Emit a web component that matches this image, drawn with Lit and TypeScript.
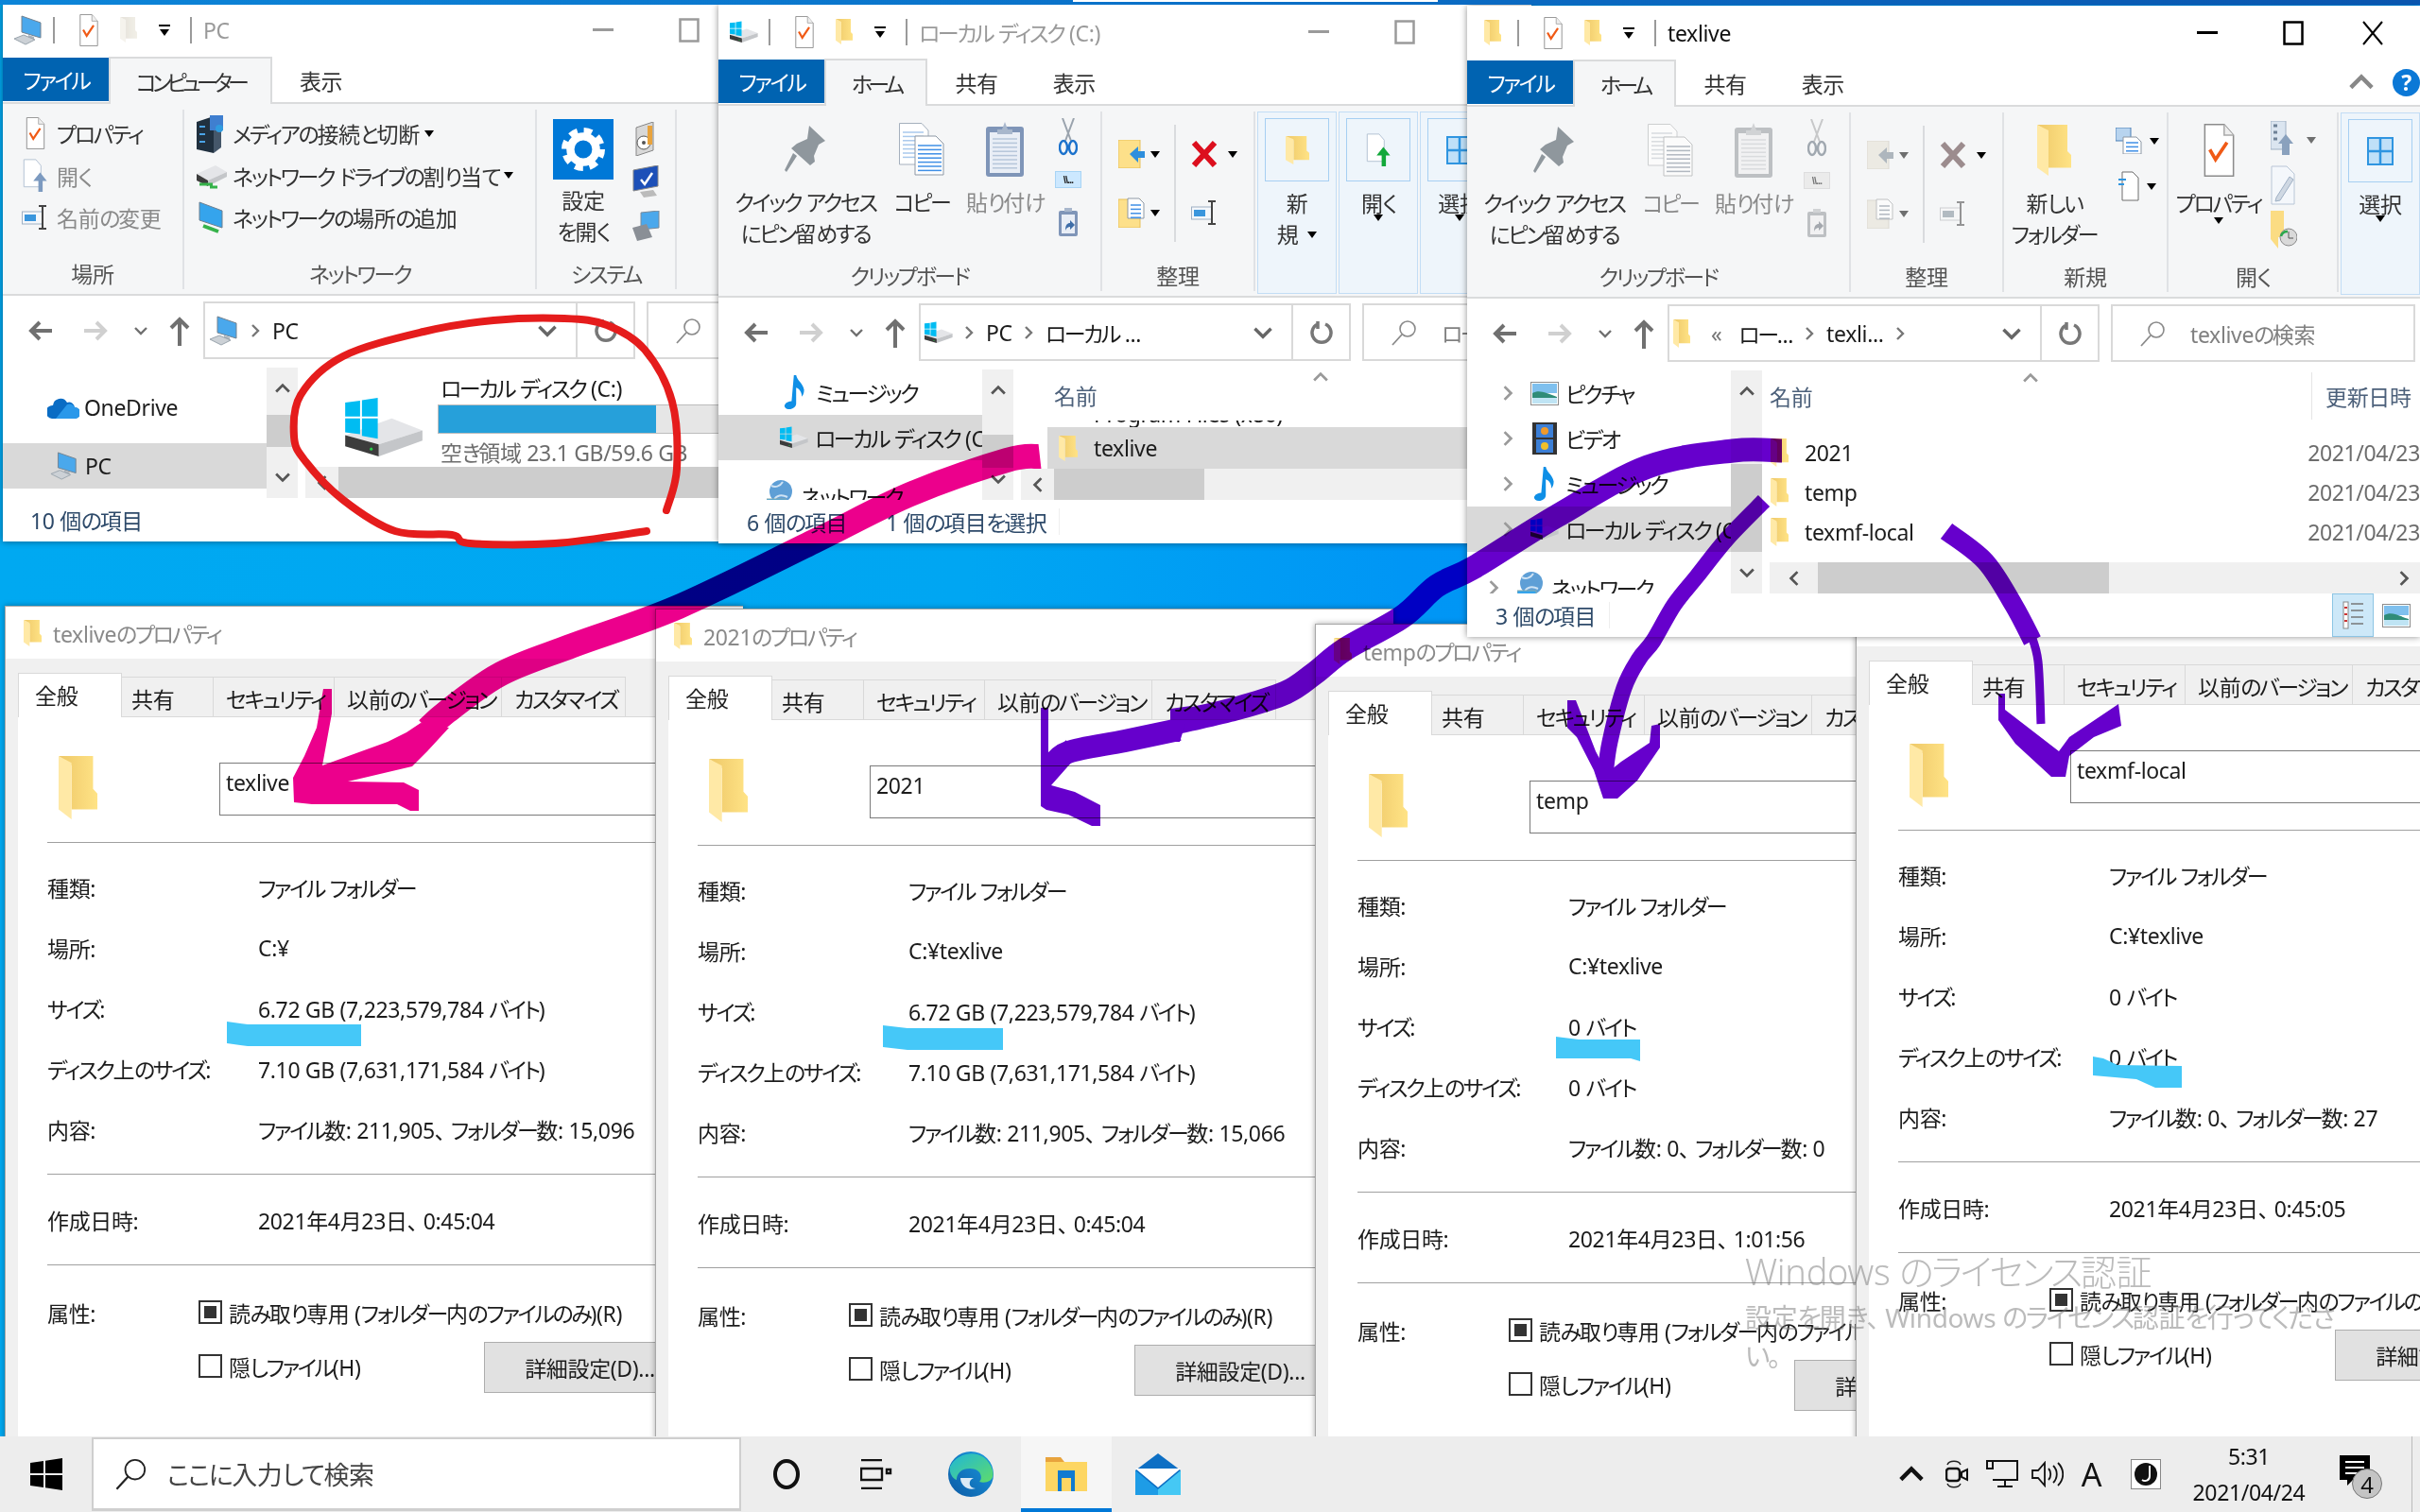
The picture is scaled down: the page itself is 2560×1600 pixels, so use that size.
import { LitElement, html, css, svg } from 'lit';
import { customElement, property } from 'lit/decorators.js';

const t = (s: string) =>
  html`<span class="t">${s.split(/([\u3040-\u30ff]+|、)/).map((p, i) =>
    i % 2 ? html`<span class=${p === '、' ? 'p' : 'k'}>${p}</span>` : p)}</span>`;

const base = css`
  * { box-sizing: border-box; }
  :host {
    font-family: "Noto Sans", "Noto Sans CJK JP", sans-serif;
    font-size: 23px;
    letter-spacing: -0.35px;
    font-feature-settings: "palt" 1;
    color: #1c1c1c;
  }
  .k { letter-spacing: -2.4px; }
  .p { margin-right: 6px; }
  svg { display: block; flex: none; }
  .off { filter: grayscale(0.85) opacity(0.55); }
  .tri { width: 0; height: 0; flex: none; border: 5.5px solid transparent; border-top: 7px solid #000; border-bottom: 0; }
`;

const folder = (w = 20, h = 30) => html`<svg width=${w} height=${h} viewBox="0 0 90 202" preserveAspectRatio="none">
  <defs><linearGradient id="fg" x1="0" x2="1"><stop offset="0" stop-color="#eec868"/><stop offset="1" stop-color="#ffe386"/></linearGradient></defs>
  <path d="M0 0H80V105L90 120V170H30V30Z" fill="url(#fg)"/>
  <path d="M0 0L30 22V202L0 170Z" fill="#ffe9a6"/></svg>`;

const pc = (s = 30) => html`<svg width=${s} height=${s} viewBox="0 0 32 32">
  <path d="M9 1L29 8V24L9 18Z" fill="#4aa8ec" stroke="#74828f"/>
  <path d="M16 21l6 2v4l-6-2z" fill="#aab3bb"/>
  <path d="M1 25l10-4 12 5-10 5z" fill="#ccd1d6" stroke="#9aa4ad"/></svg>`;

const drive = (w = 83, h = 63) => html`<svg width=${w} height=${h} viewBox="0 0 84 64">
  <path d="M0 40L50 22L83 35L36 50Z" fill="#e4e5e8"/>
  <path d="M36 50L83 35V46L36 63Z" fill="#c4c6c9"/>
  <path d="M0 40L36 50V63L0 52Z" fill="#3c3c3c"/>
  <circle cx="28" cy="55" r="1.6" fill="#28d04a"/>
  <path d="M0 5L16 3V20H0ZM18 2.5L35 0V20H18ZM0 22H16V39L0 37ZM18 22H35V44L18 41Z" fill="#00bcf2"/></svg>`;

const checkDoc = (w = 21, h = 37) => html`<svg width=${w} height=${h} viewBox="0 0 21 37">
  <path d="M.5.5H14L20.500 8V36.500H.5Z" fill="#fff" stroke="#8b8b8b"/>
  <path d="M14 .5V8H20.500" fill="#eee" stroke="#aaa"/>
  <path d="M4 18l4 7 8-12" fill="none" stroke="#f05a16" stroke-width="2.400"/></svg>`;

const openDoc = (c = '#7c9ac0') => html`<svg width="28" height="36" viewBox="0 0 28 40">
  <path d="M1 1H15L21 8V33H1Z" fill="#fff" stroke="#aebdd0"/>
  <path d="M18 39V26H12L20 16L28 26H23V39Z" fill=${c}/></svg>`;

const renameIc = (w = 28, h = 26) => html`<svg width=${w} height=${h} viewBox="0 0 28 26">
  <rect x=".5" y="7" width="21" height="13" fill="#f4f7fb" stroke="#9fb0c4"/>
  <rect x="3" y="10" width="12" height="7" fill="#3a96dd"/>
  <path d="M18 1h8M22 1v24M18 25h8" stroke="#444" stroke-width="2" fill="none"/></svg>`;

const lines = (x: number, y: number, w: number, n: number, c: string) =>
  Array.from({ length: n }, (_, i) => svg`<path d="M${x} ${y + i * 4.4}h${w}" stroke=${c} stroke-width="1.500"/>`);

const copyIc = () => html`<svg width="48" height="56" viewBox="0 0 48 56">
  <path d="M.5.5H24L31 8V44H.5Z" fill="#fff" stroke="#a5b0bd"/>${lines(4, 10, 22, 7, '#a9c9ec')}
  <path d="M17 14H39L47 22V55H17Z" fill="#fff" stroke="#8d98a5"/>${lines(20, 24, 25, 7, '#3f8fe6')}</svg>`;

const pasteIc = () => html`<svg width="40" height="58" viewBox="0 0 40 58">
  <rect x="0" y="5" width="40" height="53" rx="3" fill="#7f95b8"/>
  <rect x="4" y="11" width="32" height="43" fill="#e9eef6"/>${lines(7, 18, 26, 8, '#b6c6da')}
  <path d="M12 8h5l3-8 3 8h5v5H12z" fill="#a8b7cc"/></svg>`;

const pinIc = () => html`<svg width="44" height="52" viewBox="0 0 44 52">
  <path d="M26 1L43 17L36 21L31 33L32 39L27 43L7 25L13 20L24 15Z" fill="#8f979d"/>
  <path d="M13 33L2 50L0 48L9 30Z" fill="#8f979d"/></svg>`;

const scissors = () => html`<svg width="20" height="40" viewBox="0 0 20 40">
  <path d="M4 0L13 24M16 0L7 24" stroke="#9aa3ad" stroke-width="2" fill="none"/>
  <ellipse cx="5" cy="31" rx="4" ry="7" fill="none" stroke="#1c72cc" stroke-width="2.400"/>
  <ellipse cx="15" cy="31" rx="4" ry="7" fill="none" stroke="#1c72cc" stroke-width="2.400"/></svg>`;

const shortcutIc = () => html`<svg width="20" height="30" viewBox="0 0 20 30">
  <rect y="3" width="20" height="27" rx="2" fill="#7f95b8"/><rect x="3" y="7" width="14" height="20" fill="#e9eef6"/>
  <path d="M6 4h8V0H6z" fill="#a8b7cc"/>
  <path d="M7 24c0-6 2-8 5-8v-3l5 5-5 5v-3c-2 0-4 1-5 4z" fill="#3f6ea8"/></svg>`;

const moveIc = () => html`<svg width="28" height="30" viewBox="0 0 28 30">
  <rect width="23" height="30" fill="#fde08a" stroke="#e7bf5a"/>
  <path d="M12 15L21 7V12H28V19H21V24Z" fill="#2f8fdd"/></svg>`;

const copyToIc = () => html`<svg width="28" height="32" viewBox="0 0 28 32">
  <rect y="2" width="23" height="30" fill="#fde08a" stroke="#e7bf5a"/>
  <path d="M10 1H22L27 6V22H10Z" fill="#fff" stroke="#8d98a5"/>${lines(13, 8, 11, 4, '#3f8fe6')}</svg>`;

const delIc = () => html`<svg width="28" height="28" viewBox="0 0 28 28">
  <path d="M3 2L25 26M25 2L3 26" stroke="#dc0f1e" stroke-width="6" fill="none"/></svg>`;

const grid = () => html`<svg width="28" height="30" viewBox="0 0 28 30">
  <rect x="1" y="1" width="26" height="28" fill="#bfe0f8" stroke="#2f95e0" stroke-width="2"/>
  <path d="M14 1V29M1 15H27" stroke="#2f95e0" stroke-width="2.500"/></svg>`;

const newDoc = () => html`<svg width="22" height="32" viewBox="0 0 22 32">
  <path d="M4 1H15L21 7V31H4Z" fill="#fff" stroke="#6e6e6e"/><path d="M0 9h8M0 14h6" stroke="#2f95e0" stroke-width="2"/></svg>`;

const newItem = () => html`<svg width="28" height="28" viewBox="0 0 28 28">
  <rect x="0" y="0" width="16" height="14" fill="#b8d4ef" stroke="#4a7fb5"/>
  <path d="M8 10H22L27 15V28H8Z" fill="#fff" stroke="#8d98a5"/>${lines(11, 16, 13, 3, '#3f8fe6')}</svg>`;

const pencilDoc = () => html`<svg width="26" height="42" viewBox="0 0 26 42">
  <path d="M1 1H17L25 9V41H1Z" fill="#f4f7fb" stroke="#b9c6d6"/>
  <path d="M6 34L20 12L24 15L10 37L5 38Z" fill="#cfd8e3" stroke="#9fb0c4"/></svg>`;

const history = () => html`<svg width="28" height="40" viewBox="0 0 28 40">
  <path d="M0 0H14V28H8V40L0 30Z" fill="#fbdc83"/><circle cx="19" cy="28" r="9" fill="#d9d9d9" stroke="#888"/>
  <path d="M11 27a7 7 0 0 1 7-5" stroke="#2aa84a" stroke-width="2.500" fill="none"/><path d="M19 22v7h5" stroke="#555" fill="none"/></svg>`;

const props = () => html`<svg width="30" height="42" viewBox="0 0 30 42">
  <rect x="0" y="0" width="16" height="30" fill="#dbe5f0" stroke="#9fb0c4"/>
  <path d="M3 5h4M3 12h4M3 19h4" stroke="#6f8297" stroke-width="3"/>
  <path d="M12 36V24H8L16 14L24 24H20V36Z" fill="#8aa1bd"/></svg>`;

const music = (s = 34) => html`<svg width=${s} height=${s + 6} viewBox="0 0 20 30">
  <path d="M9 0h2c1 5 6 7 7 13 0 3-1 5-2 6 0-4-2-7-5-8v14c0 3-3 5-6 5s-5-2-4-4 4-3 6-3z" fill="#0f8fe6"/></svg>`;

const globe = () => html`<svg width="28" height="34" viewBox="0 0 28 34">
  <circle cx="15" cy="12" r="12" fill="#5e9fd6"/><path d="M5 6c4 2 9 1 12-4M8 21c2-5 8-6 14-3" stroke="#cfe3f4" stroke-width="2" fill="none"/>
  <rect x="0" y="20" width="20" height="14" fill="#35a4ec" stroke="#8aa"/></svg>`;

const cloud = () => html`<svg width="34" height="24" viewBox="0 0 34 24">
  <path d="M6 10a8 8 0 0 1 15-3 6 6 0 0 1 8 5 6 6 0 0 1 0 12H5a6 6 0 0 1 1-14z" fill="#0a6cc4"/>
  <path d="M9 24L21 9a6 6 0 0 1 8 3 6 6 0 0 1 0 12z" fill="#2a98ea"/></svg>`;

const pictures = () => html`<svg width="30" height="25" viewBox="0 0 30 25">
  <rect x=".5" y=".5" width="29" height="24" fill="#fff" stroke="#8c8c8c"/>
  <rect x="2" y="2" width="26" height="10" fill="#7fc0ee"/><path d="M2 12c8-4 14 0 26 4v7H2z" fill="#2f8c78"/><rect x="2" y="17" width="26" height="6" fill="#bfe4f4"/></svg>`;

const video = () => html`<svg width="26" height="34" viewBox="0 0 26 34">
  <rect width="26" height="34" fill="#333"/><rect x="4" y="2" width="18" height="14" fill="#3c7fd6"/><rect x="4" y="18" width="18" height="14" fill="#3c7fd6"/>
  <circle cx="13" cy="9" r="4" fill="#f09a2a"/><circle cx="13" cy="25" r="4" fill="#f0c02a"/></svg>`;

const media = () => html`<svg width="32" height="42" viewBox="0 0 32 42">
  <path d="M0 9L18 3V42L0 38Z" fill="#20303f"/><path d="M18 3L26 6V36L18 42Z" fill="#45576a"/>
  <path d="M14 2h14v16H14z" fill="#3f7fd0"/><circle cx="24" cy="16" r="4" fill="#2f9ce0"/><path d="M3 14h6M3 22h6M3 30h6" stroke="#4aa3e6" stroke-width="2"/></svg>`;

const netDrive = () => html`<svg width="32" height="28" viewBox="0 0 32 28">
  <path d="M0 12L20 3L32 10L12 19Z" fill="#e4e5e8"/><path d="M0 12L12 19V25L0 19Z" fill="#3c3c3c"/><path d="M12 19L32 10V15L12 25Z" fill="#c4c6c9"/>
  <path d="M3 23h14M14 26h8" stroke="#36b24a" stroke-width="3"/></svg>`;

const netPlace = () => html`<svg width="30" height="34" viewBox="0 0 30 34">
  <path d="M2 1L26 10V28L2 20Z" fill="#35a4ec" stroke="#6f8090"/><path d="M6 26l16 6" stroke="#36b24a" stroke-width="4"/></svg>`;

const gear = () => html`<svg width="46" height="46" viewBox="0 0 44 44">
  <circle cx="22" cy="22" r="17" fill="none" stroke="#fff" stroke-width="10" stroke-dasharray="7.500 5.850"/>
  <circle cx="22" cy="22" r="13" fill="none" stroke="#fff" stroke-width="8"/></svg>`;

const sysDisc = () => html`<svg width="24" height="36" viewBox="0 0 24 36">
  <path d="M2 6L20 0V30L2 36Z" fill="#d8d8d8" stroke="#888"/><circle cx="10" cy="22" r="7" fill="#fff" stroke="#555"/><circle cx="10" cy="22" r="2" fill="#555"/><path d="M14 4h5v20h-5z" fill="#e8a33d"/></svg>`;

const sysMon = () => html`<svg width="32" height="36" viewBox="0 0 32 36">
  <path d="M3 5L29 0V22L3 27Z" fill="#1d50b8" stroke="#888"/><path d="M11 15l4 5 8-12" stroke="#fff" stroke-width="2.500" fill="none"/><path d="M10 28l14-2 4 6-14 2z" fill="#bbb"/></svg>`;

const sysPc = () => html`<svg width="30" height="32" viewBox="0 0 30 32">
  <path d="M10 2L29 0V18L10 20Z" fill="#4aa8ec" stroke="#7a8a99"/><path d="M1 18L16 14L22 28L6 32Z" fill="#8a8f96"/></svg>`;

const viewDetails = () => html`<svg width="22" height="32" viewBox="0 0 22 32">
  <rect x="1" y="2" width="5" height="28" fill="#fff" stroke="#888"/><path d="M2 8h3M2 15h3M2 22h3" stroke="#c33" stroke-width="2"/>
  <path d="M9 4h13M9 11h13M9 18h13M9 25h13" stroke="#777" stroke-width="1.500"/></svg>`;

const search = (s = 28) => html`<svg width=${s} height=${s} viewBox="0 0 28 28">
  <circle cx="18" cy="10" r="8" fill="none" stroke="#8a8a8a" stroke-width="1.600"/><path d="M12 16L2 27" stroke="#8a8a8a" stroke-width="1.800"/></svg>`;

const chev = (c = '#888', dir: 'r' | 'd' | 'u' | 'l' = 'r', s = 14) => {
  const d = { r: 'M4 1l6 6-6 6', l: 'M10 1L4 7l6 6', d: 'M1 4l6 6 6-6', u: 'M1 10l6-6 6 6' }[dir];
  return html`<svg width=${s} height=${s} viewBox="0 0 14 14"><path d=${d} fill="none" stroke=${c} stroke-width="2.400"/></svg>`;
};

@customElement('explorer-window')
class ExplorerWindow extends LitElement {
  @property() variant: 'pc' | 'disk' | 'texlive' = 'pc';

  static styles = [base, css`
    :host { display: flex; flex-direction: column; background: #fff; box-shadow: 0 0 7px rgba(0,0,0,.45); overflow: hidden; }
    .title { height: 57px; flex: none; display: flex; align-items: center; padding-left: 12px; }
    .title .ico { width: 30px; display: flex; justify-content: center; }
    .vsep { width: 2px; height: 28px; background: #9a9a9a; }
    .m1 { margin-left: 11px; } .m2 { margin-left: 26px; } .m3 { margin-left: 23px; } .m4 { margin-left: 23px; } .m5 { margin-left: 21px; } .m6 { margin-left: 12px; }
    .dd { display: flex; flex-direction: column; align-items: center; gap: 3px; width: 12px; }
    .dd i { width: 12px; height: 2px; background: #000; }
    .wtitle { color: #9a9a9a; white-space: nowrap; }
    .wtitle.on { color: #111; }
    .ctl { margin-left: auto; display: flex; flex: none; padding-right: 0; }
    .ctl div { width: 91px; height: 40px; display: flex; align-items: center; justify-content: center; }
    .ctl div:last-child { width: 88px; margin-right: 1px; padding-right: 10px; }
    .tabs { height: 50px; flex: none; display: flex; border-bottom: 2px solid #dadbdc; position: relative; }
    .file { width: 113px; height: 46px; background: #0063b1; color: #fff; display: flex; align-items: center; justify-content: center; margin-top: 1px; }
    .tab { padding: 0 29px; height: 50px; display: flex; align-items: center; color: #333; }
    .tab .k { letter-spacing: -4.800px; }
    .tab.active { background: #f5f6f7; border: 2px solid #dadbdc; border-bottom: 0; height: 50px; justify-content: center; margin-left: -1px; padding: 0 27px; }
    .collapse { margin-left: auto; margin-right: 22px; align-self: center; display: flex; align-items: center; gap: 20px; }
    .help { width: 29px; height: 29px; border-radius: 50%; background: #0b78d6; color: #fff; text-align: center; line-height: 29px; font-weight: 700; margin-right: -22px; }
    .ribbon { height: 203px; flex: none; display: flex; padding-top: 6px; background: #f5f6f7; border-bottom: 2px solid #dadbdc; overflow: hidden; color: #333; }
    .group { display: flex; flex-direction: column; flex: none; height: 190px; border-right: 2px solid #e0e2e5; }
    .gbody { flex: 1; display: flex; min-height: 0; }
    .glabel { height: 32px; line-height: 32px; text-align: center; color: #555; white-space: nowrap; }
    .big { display: flex; flex-direction: column; align-items: center; flex: none; white-space: nowrap; }
    .big .ic { height: 80px; display: flex; align-items: center; justify-content: center; flex: none; }
    .big .tx { line-height: 33px; text-align: center; display: flex; align-items: center; justify-content: center; gap: 9px; height: 33px; }
    .big .trix { display: flex; justify-content: center; height: 14px; align-items: center; margin-top: -6px; }
    .dim { color: #8a8a8a; }
    .w184 { width: 184px; } .w62 { width: 62px; } .w114 { width: 114px; } .w106 { width: 106px; } .w98 { width: 98px; } .w64 { width: 64px; }
    .scol { display: flex; flex-direction: column; align-items: center; flex: none; padding-top: 4px; }
    .scol > div { height: 45px; display: flex; align-items: center; justify-content: center; gap: 8px; }
    .w20 { width: 20px; } .w48 { width: 48px; }
    .wide > div { height: 47px; }
    .pathb { width: 28px; height: 18px; background: #cce8ff; border: 1px solid #a8d4f5; font: 11px "Liberation Sans", sans-serif; font-weight: 700; line-height: 16px; text-align: center; letter-spacing: -1px; color: #222; }
    .pathb.off { filter: grayscale(1) opacity(.6); }
    .org { display: grid; grid-template-columns: 76px 84px; grid-auto-rows: 62px; padding-top: 14px; width: 160px; }
    .org > div { display: flex; align-items: center; gap: 6px; padding-left: 17px; }
    .org > div:nth-child(even) { padding-left: 16px; gap: 11px; border-left: 2px solid #d9dbde; }
    .srows { padding-left: 17px; padding-top: 3px; }
    .srow { height: 44.500px; display: flex; align-items: center; white-space: nowrap; gap: 6px; }
    .srow .si { width: 34px; display: flex; justify-content: center; }
    .srows.net { padding-left: 12px; }
    .srows.net .srow { gap: 5px; }
    .pl17 { padding-left: 17px; }
    .hl { width: 84px; height: 193px; flex: none; margin-left: 2px; border: 1px solid #c2ddf5; background: #eef5fb; padding: 6px 7px 0; display: flex; flex-direction: column; align-items: center; white-space: nowrap; }
    .hlin { width: 68px; height: 67px; flex: none; border: 1px solid #a6cff2; display: flex; align-items: center; justify-content: center; }
    .hl .tx { line-height: 33px; height: 33px; display: flex; align-items: center; gap: 10px; }
    .hl .first { margin-top: 7px; }
    .hl .trix { margin-top: -5px; }
    .nav { height: 76px; flex: none; display: flex; padding-top: 6px; }
    .btns { width: 212px; flex: none; display: grid; grid-template-columns: 80px 36px 60px 22px; align-items: center; justify-items: center; height: 61px; }
    .addr { width: 457px; height: 61px; flex: none; border: 2px solid #d9d9d9; display: flex; align-items: center; white-space: nowrap; overflow: hidden; }
    .addr .crumbs { flex: 1; display: flex; align-items: center; padding-left: 4px; min-width: 0; }
    .crumbs .cg { margin: 0 11px 0 10px; }
    .addr .dn { margin-right: 20px; }
    .addr .rf { width: 61px; height: 100%; border-left: 2px solid #d9d9d9; display: flex; align-items: center; justify-content: center; flex: none; }
    .sbox { flex: 1; min-width: 0; margin: 0 5px 0 12px; height: 61px; border: 2px solid #d9d9d9; display: flex; align-items: center; padding-left: 28px; gap: 26px; color: #808080; white-space: nowrap; overflow: hidden; }
    .body { flex: 1; min-height: 0; display: flex; }
    .pane { width: 279px; flex: none; overflow: hidden; white-space: nowrap; }
    .row { height: 48px; display: flex; align-items: center; overflow: hidden; }
    .row.sel { background: #d9d9d9; }
    .row.gap { margin-top: 14px; }
    .row .ri { width: 36px; flex: none; display: flex; justify-content: center; }
    .row .rt { margin-left: 4px; }
    .row .rc { width: 37px; flex: none; padding-left: 8px; }
    .pt18 { padding-top: 18px; }
    .vs { width: 33px; flex: none; background: #f0f0f0; display: flex; flex-direction: column; align-items: center; justify-content: space-between; padding: 14px 0; position: relative; }
    .vs .th { position: absolute; left: 0; right: 0; background: #cdcdcd; }
    .vs svg { position: relative; }
    .th.a { top: 50px; height: 34px; } .th.b { top: 69px; height: 35px; } .th.c { top: 99px; height: 93px; }
    .content { flex: 1; min-width: 0; margin-left: 8px; display: flex; flex-direction: column; overflow: hidden; }
    .main { flex: 1; min-height: 0; overflow: hidden; position: relative; }
    .hs { height: 33px; flex: none; display: flex; background: #f0f0f0; }
    .hs .b { width: 35px; display: flex; align-items: center; justify-content: center; flex: none; }
    .hs .thumb { background: #cdcdcd; flex: none; }
    .hs .wa { width: 700px; } .hs .wb { width: 159px; } .hs .wc { width: 308px; }
    .hs .end { margin-left: auto; }
    .hs .ww { width: 51px; }
    .tile { display: flex; padding-left: 42px; padding-top: 32px; }
    .tinfo { margin-left: 15px; margin-top: -32px; width: 400px; }
    .tname { height: 39px; line-height: 44px; padding-left: 3px; }
    .bar { height: 31px; background: #e6e6e6; border: 1px solid #bcbcbc; }
    .bar i { display: block; height: 100%; width: 230px; background: #26a0da; }
    .tfree { padding-left: 3px; margin-top: 3px; line-height: 34px; color: #6d6d6d; }
    .hdr { height: 54px; display: flex; align-items: center; color: #4c607a; position: relative; }
    .caret { position: absolute; top: 0; }
    .hdr .sep { width: 1px; height: 50px; background: #e5e5e5; }
    .cliprow { height: 7px; overflow: hidden; display: flex; align-items: flex-start; padding-left: 77px; line-height: 30px; white-space: nowrap; }
    .cliprow span { margin-top: -22px; }
    .frow { display: flex; align-items: center; white-space: nowrap; }
    .frow.sel { background: #d9d9d9; margin-left: 28px; padding-left: 12px; height: 44px; gap: 17px; }
    .cfiles { padding-top: 12px; }
    .cfiles .frow { height: 42px; padding-left: 1px; }
    .cfiles .nm { margin-left: 17px; width: 563px; }
    .cfiles .dt { color: #6d6d6d; }
    .status { height: 46px; flex: none; display: flex; align-items: center; color: #2e4a6a; white-space: nowrap; position: relative; }
    .status .sp { width: 1px; height: 28px; background: #eee; }
    .vw { margin-left: auto; display: flex; height: 100%; align-items: center; }
    .vw .on { width: 44px; height: 100%; background: #cde8f8; border: 1px solid #8cc5e4; display: flex; align-items: center; justify-content: center; }
    .vw .pic { margin: 0 10px 0 9px; }
    .w406 { width: 406px; flex: none; }
    .gw192 { width: 192px; } .gw373 { width: 373px; } .gw148 { width: 148px; }
    .setbox { width: 64px; height: 64px; background: #0078d7; display: flex; align-items: center; justify-content: center; margin-top: 4px; }
    .sysc { margin-left: 10px; padding-top: 8px; }
    .sysc > div { height: 46px; }
    .nw { margin-left: 4px; width: 62px; padding-top: 6px; }
    .nw > div { height: 48px; }
    .op { width: 70px; padding-top: 6px; align-items: flex-start; margin-left: 2px; }
    .op > div { justify-content: flex-start; gap: 8px; }
    .hname1 { margin-left: 35px; }
    .c1 { left: 309px; }
    .c2 { left: 268px; }
    .spacer { margin-left: auto; }
    .hdate { margin-left: 14px; width: 100px; white-space: nowrap; }
    .lq { margin-left: 22px; color: #777; }
    .cn { margin-left: 18px; }
    .s1 { margin-left: 29px; }
    .s2 { margin-left: 30px; }
    .s3 { margin-left: 41px; }
    .s3 + .sp { margin-left: 12px; }
    .s4 { margin-left: 30px; }
    .s5 { margin-left: 14px; }
  `];

  private titleBar(icon: unknown, folderIc: unknown, label: string, on: boolean) {
    const c = on ? '#000' : '#9a9a9a';
    return html`<div class="title">
      <div class="ico">${icon}</div><div class="vsep m1"></div>
      <div class="m2">${checkDoc(20, 34)}</div><div class="m3">${folderIc}</div>
      <div class="dd m4"><i></i><div class="tri"></div></div><div class="vsep m5"></div>
      <div class="wtitle m6 ${on ? 'on' : ''}">${t(label)}</div>
      <div class="ctl">
        <div><svg width="22" height="4"><rect width="22" height="3" fill=${c}/></svg></div>
        <div><svg width="22" height="26"><rect x="1.500" y="1.500" width="19" height="23" fill="none" stroke=${c} stroke-width="2.500"/></svg></div>
        <div><svg width="22" height="26"><path d="M1 1L21 25M21 1L1 25" stroke=${c} stroke-width="2"/></svg></div>
      </div></div>`;
  }

  private tabs(active: string, rest: string[], help = false) {
    return html`<div class="tabs">
      <div class="file">${t('ファイル')}</div>
      <div class="tab active">${t(active)}</div>
      ${rest.map((r) => html`<div class="tab">${t(r)}</div>`)}
      ${help ? html`<div class="collapse">${chev('#888', 'u', 26)}<div class="help">?</div></div>` : ''}
    </div>`;
  }

  private clipboard(off: boolean) {
    const o = off ? 'off' : '';
    const d = off ? 'dim' : '';
    return html`<div class="group w406"><div class="gbody">
      <div class="big w184"><div class="ic">${pinIc()}</div><div class="tx">${t('クイック アクセス')}</div><div class="tx">${t('にピン留めする')}</div></div>
      <div class="big w62"><div class="ic ${o}">${copyIc()}</div><div class="tx ${d}">${t('コピー')}</div></div>
      <div class="big w114"><div class="ic ${o}">${pasteIc()}</div><div class="tx dim">${t('貼り付け')}</div></div>
      <div class="scol w20"><div class=${o}>${scissors()}</div><div><div class="pathb ${o}">\\\\...</div></div><div class=${o}>${shortcutIc()}</div></div>
      </div><div class="glabel">${t('クリップボード')}</div></div>`;
  }

  private organize(off: boolean) {
    const o = off ? 'off' : '';
    return html`<div class="group"><div class="gbody"><div class="org">
      <div><span class=${o}>${moveIc()}</span><div class="tri ${o}"></div></div>
      <div><span class=${o}>${delIc()}</span><div class="tri"></div></div>
      <div><span class=${o}>${copyToIc()}</span><div class="tri ${o}"></div></div>
      <div><span class=${o}>${renameIc()}</span></div>
      </div></div><div class="glabel">${t('整理')}</div></div>`;
  }

  private hl(icon: unknown, l1: string, l2: unknown, tri1 = false) {
    return html`<div class="hl"><div class="hlin">${icon}</div>
      <div class="tx first">${t(l1)}</div>
      ${tri1 ? html`<div class="tx">${l2}<div class="tri"></div></div>` : html`<div class="trix"><div class="tri"></div></div>`}
    </div>`;
  }

  private nav(icon: unknown, crumbs: unknown, searchText = '') {
    return html`<div class="nav">
      <div class="btns">
        <svg width="26" height="22" viewBox="0 0 26 22"><path d="M25 11H4M12 2L3 11l9 9" fill="none" stroke="#707070" stroke-width="4"/></svg>
        <svg width="26" height="22" viewBox="0 0 26 22"><path d="M1 11H22M14 2l9 9-9 9" fill="none" stroke="#d0d0d0" stroke-width="4"/></svg>
        ${chev('#707070', 'd', 14)}
        <svg width="22" height="32" viewBox="0 0 22 32"><path d="M11 32V4M2 13l9-9 9 9" fill="none" stroke="#707070" stroke-width="4"/></svg>
      </div>
      <div class="addr"><div class="crumbs">${icon}${crumbs}</div>
        <div class="dn">${chev('#666', 'd', 20)}</div>
        <div class="rf"><svg width="24" height="28" viewBox="0 0 24 28"><path d="M8 5a10 10 0 1 0 8 0M8 2v8" fill="none" stroke="#777" stroke-width="3.500"/></svg></div></div>
      <div class="sbox">${search(28)}<span>${t(searchText)}</span></div>
    </div>`;
  }

  private treeRow(cls: string, icon: unknown, label: string, pad: number, chevron = false) {
    return html`<div class="row ${cls}" style="padding-left:${pad}px">
      ${chevron ? html`<div class="rc">${chev('#9a9a9a', 'r', 16)}</div>` : ''}
      <div class="ri">${icon}</div><div class="rt">${t(label)}</div></div>`;
  }

  private vscroll(th: string) {
    return html`<div class="vs"><div class="th ${th}"></div>${chev('#555', 'u', 16)}${chev('#555', 'd', 16)}</div>`;
  }

  private renderPc() {
    return html`
      ${this.titleBar(pc(32), html`<span class="off">${folder(18, 27)}</span>`, 'PC', false)}
      ${this.tabs('コンピューター', ['表示'])}
      <div class="ribbon">
        <div class="group gw192"><div class="gbody"><div class="srows">
          <div class="srow"><div class="si">${checkDoc(21, 34)}</div>${t('プロパティ')}</div>
          <div class="srow dim"><div class="si">${openDoc()}</div>${t('開く')}</div>
          <div class="srow dim"><div class="si">${renameIc()}</div>${t('名前の変更')}</div>
        </div></div><div class="glabel">${t('場所')}</div></div>
        <div class="group gw373"><div class="gbody"><div class="srows net">
          <div class="srow"><div class="si">${media()}</div>${t('メディアの接続と切断')}<div class="tri"></div></div>
          <div class="srow"><div class="si">${netDrive()}</div>${t('ネットワーク ドライブの割り当て')}<div class="tri"></div></div>
          <div class="srow"><div class="si">${netPlace()}</div>${t('ネットワークの場所の追加')}</div>
        </div></div><div class="glabel">${t('ネットワーク')}</div></div>
        <div class="group gw148"><div class="gbody pl17">
          <div class="big w64"><div class="ic"><div class="setbox">${gear()}</div></div><div class="tx">${t('設定')}</div><div class="tx">${t('を開く')}</div></div>
          <div class="scol w48 sysc"><div>${sysDisc()}</div><div>${sysMon()}</div><div>${sysPc()}</div></div>
        </div><div class="glabel">${t('システム')}</div></div>
      </div>
      ${this.nav(pc(32), html`<span class="cg">${chev('#777', 'r', 14)}</span>PC`)}
      <div class="body">
        <div class="pane pt18">
          ${this.treeRow('', cloud(), 'OneDrive', 46)}
          ${this.treeRow('sel gap', pc(30), 'PC', 47)}
        </div>
        ${this.vscroll('a')}
        <div class="content">
          <div class="main"><div class="tile">${drive()}<div class="tinfo">
            <div class="tname">${t('ローカル ディスク (C:)')}</div>
            <div class="bar"><i></i></div>
            <div class="tfree">${t('空き領域 23.1 GB/59.6 GB')}</div>
          </div></div></div>
          <div class="hs"><div class="b">${chev('#555', 'l', 16)}</div><div class="thumb wa"></div></div>
        </div>
      </div>
      <div class="status"><span class="s1">${t('10 個の項目')}</span></div>`;
  }

  private renderDisk() {
    const smallDrive = drive(30, 24);
    return html`
      ${this.titleBar(drive(30, 26), folder(18, 27), 'ローカル ディスク (C:)', false)}
      ${this.tabs('ホーム', ['共有', '表示'])}
      <div class="ribbon">
        ${this.clipboard(false)}
        ${this.organize(false)}
        ${this.hl(folder(25, 30), '新', t('規'), true)}
        ${this.hl(openDoc('#12a83a'), '開く', '')}
        ${this.hl(grid(), '選択', '')}
      </div>
      ${this.nav(drive(30, 26), html`<span class="cg">${chev('#777', 'r', 14)}</span>PC<span class="cg">${chev('#777', 'r', 14)}</span>${t('ローカル ...')}`, 'ロー')}
      <div class="body">
        <div class="pane">
          ${this.treeRow('', music(30), 'ミュージック', 63)}
          ${this.treeRow('sel', smallDrive, 'ローカル ディスク (C:)', 62)}
          ${this.treeRow('gap', globe(), 'ネットワーク', 47)}
        </div>
        ${this.vscroll('b')}
        <div class="content">
          <div class="main">
            <div class="hdr"><span class="hname1">${t('名前')}</span><span class="caret c1">${chev('#999', 'u', 16)}</span></div>
            <div class="cliprow"><span>Program Files (x86)</span></div>
            <div class="frow sel">${folder(20, 27)}<span>texlive</span></div>
          </div>
          <div class="hs"><div class="b">${chev('#555', 'l', 16)}</div><div class="thumb wb"></div></div>
        </div>
      </div>
      <div class="status"><span class="s2">${t('6 個の項目')}</span><span class="s3">${t('1 個の項目を選択')}</span><span class="sp"></span>
        <div class="vw"><div class="on">${viewDetails()}</div></div></div>`;
  }

  private renderTexlive() {
    const files = ['2021', 'temp', 'texmf-local'];
    return html`
      ${this.titleBar(folder(18, 27), folder(18, 27), 'texlive', true)}
      ${this.tabs('ホーム', ['共有', '表示'], true)}
      <div class="ribbon">
        ${this.clipboard(true)}
        ${this.organize(true)}
        <div class="group"><div class="gbody">
          <div class="big w106"><div class="ic">${folder(36, 54)}</div><div class="tx">${t('新しい')}</div><div class="tx">${t('フォルダー')}</div></div>
          <div class="scol nw">
            <div>${newItem()}<div class="tri"></div></div>
            <div>${newDoc()}<div class="tri"></div></div>
          </div>
        </div><div class="glabel">${t('新規')}</div></div>
        <div class="group"><div class="gbody">
          <div class="big w106"><div class="ic">${checkDoc(41, 56)}</div><div class="tx">${t('プロパティ')}</div><div class="trix"><div class="tri"></div></div></div>
          <div class="scol wide op">
            <div>${props()}<div class="tri off"></div></div>
            <div class="nt">${pencilDoc()}</div>
            <div class="nt">${history()}</div>
          </div>
        </div><div class="glabel">${t('開く')}</div></div>
        ${this.hl(grid(), '選択', '')}
      </div>
      ${this.nav(folder(18, 30), html`<span class="lq">«</span><span class="cn">${t('ロー...')}</span><span class="cg">${chev('#777', 'r', 14)}</span>texli...<span class="cg">${chev('#777', 'r', 14)}</span>`, 'texliveの検索')}
      <div class="body">
        <div class="pane">
          ${this.treeRow('', pictures(), 'ピクチャ', 27, true)}
          ${this.treeRow('', video(), 'ビデオ', 27, true)}
          ${this.treeRow('', music(30), 'ミュージック', 27, true)}
          ${this.treeRow('sel', drive(30, 24), 'ローカル ディスク (C:)', 27, true)}
          ${this.treeRow('gap', globe(), 'ネットワーク', 12, true)}
        </div>
        ${this.vscroll('c')}
        <div class="content">
          <div class="main">
            <div class="hdr"><span>${t('名前')}</span><span class="caret c2">${chev('#999', 'u', 16)}</span><span class="spacer"></span><span class="sep"></span><span class="hdate">${t('更新日時')}</span></div>
            <div class="cfiles">${files.map((f) => html`<div class="frow">${folder(19, 30)}<span class="nm">${f}</span><span class="dt">2021/04/23</span></div>`)}</div>
          </div>
          <div class="hs"><div class="b ww">${chev('#555', 'l', 16)}</div><div class="thumb wc"></div><div class="b end">${chev('#555', 'r', 16)}</div></div>
        </div>
      </div>
      <div class="status"><span class="s4">${t('3 個の項目')}</span><span class="sp s5"></span>
        <div class="vw"><div class="on">${viewDetails()}</div><div class="pic">${pictures()}</div></div></div>`;
  }

  render() {
    return this.variant === 'pc' ? this.renderPc() : this.variant === 'disk' ? this.renderDisk() : this.renderTexlive();
  }
}

@customElement('prop-dialog')
class PropDialog extends LitElement {
  @property() name = '';
  @property() where = '';
  @property() size = '';
  @property() disk = '';
  @property() contents = '';
  @property() created = '';

  static styles = [base, css`
    :host { display: flex; flex-direction: column; background: #f0f0f0; border-top: 1px solid #a8a8a8; border-left: 1px solid #a8a8a8; box-shadow: 0 0 6px rgba(0,0,0,.35); overflow: hidden; }
    .title { height: 55px; background: #fff; flex: none; display: flex; align-items: center; padding-left: 19px; gap: 12px; color: #8a8a8a; white-space: nowrap; }
    .tabs { height: 62px; flex: none; margin: 0 13px; display: flex; align-items: flex-end; border-bottom: 1px solid #d9d9d9; white-space: nowrap; }
    .tab { height: 42px; border: 1px solid #d9d9d9; border-bottom: 0; border-left: 0; display: flex; align-items: center; padding-left: 13px; padding-top: 2px; color: #1c1c1c; flex: none; }
    .tab.on { height: 47px; background: #fff; margin-bottom: -1px; border-left: 1px solid #d9d9d9; padding-left: 17px; padding-top: 0; padding-bottom: 2px; }
    .w110 { width: 110px; } .w97 { width: 97px; padding-left: 10px; } .w128 { width: 128px; } .w177 { width: 177px; } .w131 { width: 131px; }
    .panel { flex: 1; background: #fff; margin: 0 13px; padding: 0 31px; }
    .named { height: 133px; display: flex; align-items: flex-start; border-bottom: 1px solid #a0a0a0; }
    .fic { margin: 41px 0 0 12px; flex: none; }
    .inp { margin: 48px 0 0 129px; height: 56px; flex: 1; border: 1px solid #7a7a7a; line-height: 40px; padding-left: 6px; white-space: nowrap; }
    .info { display: grid; grid-template-columns: 223px 1fr; grid-auto-rows: 64px; align-items: center; padding: 15px 0; border-bottom: 1px solid #a0a0a0; white-space: nowrap; }
    .date { display: grid; grid-template-columns: 223px 1fr; height: 96px; align-items: center; border-bottom: 1px solid #a0a0a0; white-space: nowrap; }
    .attr { display: grid; grid-template-columns: 160px 1fr; grid-auto-rows: 57px; padding-top: 21px; align-items: center; white-space: nowrap; }
    .attr .r1 { display: flex; align-items: center; }
    .attr .r2 { display: flex; align-items: center; }
    .cb { width: 25px; height: 25px; border: 2px solid #333; flex: none; margin-right: 7px; display: flex; align-items: center; justify-content: center; }
    .cb i { width: 13px; height: 13px; background: #333; }
    .chk { width: 302px; display: flex; align-items: center; flex: none; }
    .btn { width: 224px; height: 54px; flex: none; background: #e1e1e1; border: 1px solid #adadad; display: flex; align-items: center; justify-content: center; margin-top: 2px; }
  `];

  render() {
    return html`
      <div class="title">${folder(19, 28)}<span>${t(this.name + 'のプロパティ')}</span></div>
      <div class="tabs">
        <div class="tab on w110">${t('全般')}</div>
        <div class="tab w97">${t('共有')}</div>
        <div class="tab w128">${t('セキュリティ')}</div>
        <div class="tab w177">${t('以前のバージョン')}</div>
        <div class="tab w131">${t('カスタマイズ')}</div>
      </div>
      <div class="panel">
        <div class="named"><div class="fic">${folder(41, 67)}</div><div class="inp">${this.name}</div></div>
        <div class="info">
          <div>${t('種類:')}</div><div>${t('ファイル フォルダー')}</div>
          <div>${t('場所:')}</div><div>${t(this.where)}</div>
          <div>${t('サイズ:')}</div><div>${t(this.size)}</div>
          <div>${t('ディスク上のサイズ:')}</div><div>${t(this.disk)}</div>
          <div>${t('内容:')}</div><div>${t(this.contents)}</div>
        </div>
        <div class="date"><div>${t('作成日時:')}</div><div>${t(this.created)}</div></div>
        <div class="attr">
          <div>${t('属性:')}</div>
          <div class="r1"><div class="cb"><i></i></div>${t('読み取り専用 (フォルダー内のファイルのみ)(R)')}</div>
          <div></div>
          <div class="r2"><div class="chk"><div class="cb"></div>${t('隠しファイル(H)')}</div><div class="btn">${t('詳細設定(D)...')}</div></div>
        </div>
      </div>`;
  }
}

@customElement('win-taskbar')
class WinTaskbar extends LitElement {
  static styles = [base, css`
    :host { display: flex; height: 80px; background: #ededed; align-items: center; }
    .c { height: 80px; display: flex; align-items: center; justify-content: center; flex: none; }
    .w97 { width: 97px; } .w96 { width: 96px; } .w94 { width: 94px; } .w106 { width: 106px; } .w98 { width: 98px; }
    .box { width: 687px; height: 78px; background: #fff; border: 2px solid #cfcfcf; border-bottom-width: 3px; display: flex; align-items: center; padding-left: 22px; gap: 22px; font-size: 27px; color: #444; flex: none; }
    .box .k { letter-spacing: -1.500px; }
    .active { background: #f6f6f6; position: relative; }
    .active::after { content: ""; position: absolute; left: 0; right: 0; bottom: 0; height: 4px; background: #0078d7; }
    .tray { margin-left: auto; display: grid; grid-template-columns: 48px 48px 47px 49px 45px 70px 148px 84px 23px; height: 80px; align-items: center; justify-items: center; color: #111; }
    .clock { display: flex; flex-direction: column; align-items: center; line-height: 38px; white-space: nowrap; }
    .a { font-size: 34px; }
    .ntf { position: relative; width: 40px; height: 40px; }
    .badge { position: absolute; left: 13px; top: 14px; width: 32px; height: 32px; border-radius: 50%; background: #c4c4c4; border: 1px solid #777; display: flex; align-items: center; justify-content: center; font-size: 24px; }
    .end { height: 80px; border-left: 1px solid #bbb; justify-self: end; width: 9px; }
  `];
  render() {
    return html`
      <div class="c w97"><svg width="34" height="34" viewBox="0 0 34 34"><path d="M0 5L14 3V16H0ZM16 2.700L34 0V16H16ZM0 18H14V31L0 29ZM16 18H34V34L16 31.300Z" fill="#000"/></svg></div>
      <div class="box"><svg width="34" height="34" viewBox="0 0 28 28"><circle cx="18" cy="10" r="8.500" fill="none" stroke="#222" stroke-width="1.500"/><path d="M12 16L2 27" stroke="#222" stroke-width="1.800"/></svg>${t('ここに入力して検索')}</div>
      <div class="c w96"><svg width="30" height="34" viewBox="0 0 30 34"><ellipse cx="15" cy="17" rx="12" ry="14" fill="none" stroke="#111" stroke-width="4"/></svg></div>
      <div class="c w94"><svg width="34" height="32" viewBox="0 0 34 32"><path d="M1 1h22M1 10h22v12H1zM1 31h22M28 11h4v4h-4z" fill="none" stroke="#111" stroke-width="2.400"/></svg></div>
      <div class="c w106"><svg width="50" height="48" viewBox="0 0 50 48">
        <defs><linearGradient id="eg" x1="0" y1="1" x2="1" y2="0"><stop offset="0" stop-color="#0c59a4"/><stop offset="1" stop-color="#1b9de2"/></linearGradient>
        <linearGradient id="eh" x1="0" y1="0" x2="1" y2="1"><stop offset="0" stop-color="#1fb6d8"/><stop offset="1" stop-color="#5fdc6a"/></linearGradient></defs>
        <circle cx="25" cy="24" r="24" fill="url(#eg)"/>
        <path d="M3 16C10 0 40-6 48 20c3 12-8 14-14 12 4-4 2-14-10-14-10 0-14 6-14 12C4 28 2 20 3 16z" fill="url(#eh)"/>
        <path d="M14 28c0 8 8 14 16 11-8 0-8-9-2-11z" fill="#fff" opacity=".85"/></svg></div>
      <div class="c w96 active"><svg width="44" height="36" viewBox="0 0 44 36">
        <path d="M0 0H16L20 5H0Z" fill="#e8a33d"/><rect y="5" width="44" height="31" fill="#fdd663"/>
        <path d="M13 14H31V36H27V22H17V36H13Z" fill="#0f7ad1"/></svg></div>
      <div class="c w98"><svg width="48" height="44" viewBox="0 0 48 44">
        <path d="M24 0L48 18V44H0V18Z" fill="#0d6fc4"/><path d="M0 16H48L24 36Z" fill="#fff"/><path d="M0 18L24 38V44H0Z" fill="#1e9ce6"/><path d="M48 18L24 38V44H48Z" fill="#45c8f4"/></svg></div>
      <div class="tray">
        <div>${chev('#111', 'u', 26)}</div>
        <div><svg width="24" height="32" viewBox="0 0 24 32"><path d="M2 6C4 1 14 1 16 6M2 26c2 5 12 5 14 0" fill="none" stroke="#222" stroke-width="1.500"/><rect x="1" y="10" width="14" height="13" rx="3" fill="none" stroke="#111" stroke-width="2.500"/><path d="M17 14l6-3v11l-6-3z" fill="none" stroke="#111" stroke-width="2"/></svg></div>
        <div><svg width="34" height="30" viewBox="0 0 34 30"><path d="M7 1h26v20H7M1 1h6v8H1zM20 21v7M12 28h16" fill="none" stroke="#111" stroke-width="2"/></svg></div>
        <div><svg width="34" height="28" viewBox="0 0 34 28"><path d="M1 10h6l7-8v24l-7-8H1zM18 8c3 3 3 9 0 12M23 5c5 5 5 13 0 18M28 2c7 7 7 17 0 24" fill="none" stroke="#111" stroke-width="1.800"/></svg></div>
        <div class="a">A</div>
        <div><svg width="32" height="32" viewBox="0 0 32 32"><rect x=".5" y=".5" width="31" height="31" fill="#fff" stroke="#888"/><circle cx="16" cy="16" r="12" fill="#111"/><path d="M20 7v11c0 5-5 6-8 4" fill="none" stroke="#fff" stroke-width="2"/></svg></div>
        <div class="clock"><span>5:31</span><span>2021/04/24</span></div>
        <div class="ntf"><svg width="32" height="40" viewBox="0 0 32 40"><path d="M0 0H32V26H14L8 32V26H0Z" fill="#000"/><path d="M6 7h20M6 13h20M6 19h14" stroke="#fff" stroke-width="2"/></svg><div class="badge">4</div></div>
        <div class="end"></div>
      </div>`;
  }
}

type P = [number, number];
const smooth = (pts: P[]) => {
  let d = `M${pts[0][0]} ${pts[0][1]}`;
  for (let i = 0; i < pts.length - 1; i++) {
    const p0 = pts[i - 1] || pts[i], p1 = pts[i], p2 = pts[i + 1], p3 = pts[i + 2] || p2;
    d += `C${p1[0] + (p2[0] - p0[0]) / 6} ${p1[1] + (p2[1] - p0[1]) / 6} ${p2[0] - (p3[0] - p1[0]) / 6} ${p2[1] - (p3[1] - p1[1]) / 6} ${p2[0]} ${p2[1]}`;
  }
  return d;
};

const red: P[] = [[705, 540], [716, 496], [711, 425], [682, 370], [642, 344], [597, 337], [522, 339], [448, 351], [363, 377], [318, 418], [311, 462], [323, 488], [363, 529], [418, 562], [478, 566], [497, 575], [587, 575], [684, 562]];
const pinkMain: P[] = [[1100, 483], [1065, 487], [963, 523], [861, 573], [718, 642], [606, 683], [530, 713], [473, 753], [452, 772]];
const pur1: P[] = [[1885, 477], [1833, 477], [1743, 494], [1647, 546], [1560, 600], [1520, 620], [1483, 653], [1423, 687], [1390, 713], [1360, 733], [1307, 750], [1247, 764]];
const pur1b: P[] = [[1247, 772], [1190, 784], [1130, 796], [1112, 812]];
const pur2: P[] = [[1866, 530], [1827, 570], [1795, 610], [1771, 640], [1749, 678], [1734, 697], [1718, 728], [1703, 785], [1698, 820]];
const pur3: P[] = [[2059, 562], [2100, 594], [2130, 640], [2150, 678]];
const pur3b: P[] = [[2148, 670], [2156, 700], [2159, 766]];

@customElement('app-root')
class AppRoot extends LitElement {
  static styles = [base, css`
    :host { display: block; position: relative; width: 2560px; height: 1600px; overflow: hidden; background: linear-gradient(90deg, #00a9f1 0%, #00a6f2 40%, #0096f5 58%, #0090f5 100%); }
    .topbar { position: absolute; left: 0; top: 0; width: 100%; height: 5px; background: linear-gradient(90deg, #0c85d8, #0a70c8 50%, #0a55ae); }
    .topbar i { display: block; margin-left: 1135px; width: 386px; height: 2px; background: #fff; }
    explorer-window, prop-dialog { position: absolute; }
    .wa { left: 3px; top: 3px; width: 860px; height: 570px; }
    .wb { left: 760px; top: 5px; width: 860px; height: 570px; }
    .wc { left: 1552px; top: 6px; width: 1008px; height: 668px; }
    prop-dialog { width: 781px; height: 1000px; }
    .d1 { left: 5px; top: 641px; }
    .d2 { left: 693px; top: 644px; }
    .d3 { left: 1391px; top: 660px; }
    .d4 { left: 1963px; top: 628px; }
    win-taskbar { position: absolute; left: 0; top: 1520px; width: 2560px; }
    .ink { position: absolute; left: 0; top: 0; pointer-events: none; }
    .mult { mix-blend-mode: multiply; }
    .wm { position: absolute; left: 1846px; top: 1322px; color: rgba(120,120,120,.5); font-size: 28px; line-height: 41px; width: 632px; pointer-events: none; }
    .wm .h { font-size: 38px; line-height: 46px; margin-bottom: 6px; white-space: nowrap; font-weight: 300; }
  `];

  render() {
    return html`
      <prop-dialog class="d1" name="texlive" where="C:¥" size="6.72 GB (7,223,579,784 バイト)" disk="7.10 GB (7,631,171,584 バイト)" contents="ファイル数: 211,905、フォルダー数: 15,096" created="2021年4月23日、0:45:04"></prop-dialog>
      <prop-dialog class="d2" name="2021" where="C:¥texlive" size="6.72 GB (7,223,579,784 バイト)" disk="7.10 GB (7,631,171,584 バイト)" contents="ファイル数: 211,905、フォルダー数: 15,066" created="2021年4月23日、0:45:04"></prop-dialog>
      <prop-dialog class="d3" name="temp" where="C:¥texlive" size="0 バイト" disk="0 バイト" contents="ファイル数: 0、フォルダー数: 0" created="2021年4月23日、1:01:56"></prop-dialog>
      <prop-dialog class="d4" name="texmf-local" where="C:¥texlive" size="0 バイト" disk="0 バイト" contents="ファイル数: 0、フォルダー数: 27" created="2021年4月23日、0:45:05"></prop-dialog>
      <explorer-window class="wa" variant="pc"></explorer-window>
      <explorer-window class="wb" variant="disk"></explorer-window>
      <explorer-window class="wc" variant="texlive"></explorer-window>
      <div class="topbar"><i></i></div>
      <win-taskbar></win-taskbar>
      <svg class="ink" width="2560" height="1600" viewBox="0 0 2560 1600">
        <path d=${smooth(red)} fill="none" stroke="#e51c1c" stroke-width="8" stroke-linecap="round" stroke-linejoin="round"/>
        <path d="M240 1081L262 1084L382 1084V1107H262L240 1104Z" fill="#45c8f8"/>
        <path d="M934 1085L960 1088L1061 1088V1111H960L934 1108Z" fill="#45c8f8"/>
        <path d="M1646 1097L1670 1100L1735 1100V1123L1725 1120H1646Z" fill="#45c8f8"/>
        <path d="M2214 1118L2225 1120L2240 1127L2308 1128V1151H2280L2260 1142L2214 1138Z" fill="#45c8f8"/>
      </svg>
      <svg class="ink mult" width="2560" height="1600" viewBox="0 0 2560 1600">
        <g fill="#ec008c">
          <path d=${smooth(pinkMain)} fill="none" stroke="#ec008c" stroke-width="26"/>
          <path d="M342 729H351V755L341 810L410 785L430 775L445 765L475 770L452 795L436 811L368 827L427 828L443 836V858H434L420 851H330L311 849L310 823L322 800L335 770Z"/>
        </g>
        <g fill="#6600cc">
          <path d=${smooth(pur1)} fill="none" stroke="#6600cc" stroke-width="25"/>
          <path d=${smooth(pur1b)} fill="none" stroke="#6600cc" stroke-width="24"/>
          <path d="M1238 750L1260 747L1248 785H1238Z"/>
          <path d="M1101 749H1109V802L1128 783L1135 805L1112 831L1137 838L1164 852V874H1155L1130 862L1107 857L1101 853Z"/>
          <path d=${smooth(pur2)} fill="none" stroke="#6600cc" stroke-width="17"/>
          <path d="M1658 741H1667L1688 795L1700 818L1715 806L1745 786L1747 768L1756 766V791L1732 826L1711 845H1696L1686 815L1668 780L1658 770Z"/>
          <path d=${smooth(pur3)} fill="none" stroke="#6600cc" stroke-width="20"/>
          <path d=${smooth(pur3b)} fill="none" stroke="#6600cc" stroke-width="9"/>
          <path d="M2114 734H2121V751L2178 795L2189 780L2241 745L2244 768L2215 780L2189 800L2185 822H2170L2132 787L2114 762Z"/>
        </g>
      </svg>
      <div class="wm"><div class="h">${t('Windows のライセンス認証')}</div><div>${t('設定を開き、Windows のライセンス認証を行ってください。')}</div></div>
    `;
  }
}
